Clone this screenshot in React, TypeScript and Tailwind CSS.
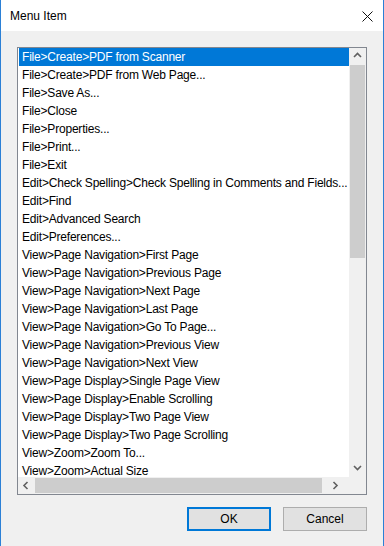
import { useState } from 'react'

const items = [
  'File>Create>PDF from Scanner',
  'File>Create>PDF from Web Page...',
  'File>Save As...',
  'File>Close',
  'File>Properties...',
  'File>Print...',
  'File>Exit',
  'Edit>Check Spelling>Check Spelling in Comments and Fields...',
  'Edit>Find',
  'Edit>Advanced Search',
  'Edit>Preferences...',
  'View>Page Navigation>First Page',
  'View>Page Navigation>Previous Page',
  'View>Page Navigation>Next Page',
  'View>Page Navigation>Last Page',
  'View>Page Navigation>Go To Page...',
  'View>Page Navigation>Previous View',
  'View>Page Navigation>Next View',
  'View>Page Display>Single Page View',
  'View>Page Display>Enable Scrolling',
  'View>Page Display>Two Page View',
  'View>Page Display>Two Page Scrolling',
  'View>Zoom>Zoom To...',
  'View>Zoom>Actual Size',
]

function Chevron({ dir }: { dir: 'up' | 'down' | 'left' | 'right' }) {
  const d = {
    up: 'M1 5 L4.5 1.5 L8 5',
    down: 'M1 2 L4.5 5.5 L8 2',
    left: 'M5.5 1 L2 4.5 L5.5 8',
    right: 'M2.5 1 L6 4.5 L2.5 8',
  }[dir]
  return (
    <svg width="9" height="9" viewBox="0 0 9 9" fill="none">
      <path d={d} stroke="#606060" strokeWidth="1.6" />
    </svg>
  )
}

export default function App() {
  const [selected, setSelected] = useState(0)

  return (
    <div
      className="w-[384px] h-[546px] flex flex-col bg-[#f0f0f0] border-x border-[#2b80d6] overflow-hidden text-[12px] text-black"
      style={{ fontFamily: '"Liberation Sans", "Noto Sans", sans-serif' }}
    >
      {/* title bar */}
      <div className="h-[31px] bg-white flex items-center justify-between pl-[9px] pr-[10px] shrink-0">
        <span className="text-[12px]">Menu Item</span>
        <svg width="11" height="11" viewBox="0 0 11 11" className="mt-px">
          <path d="M0.5 0.5 L10.5 10.5 M10.5 0.5 L0.5 10.5" stroke="#111" strokeWidth="1" />
        </svg>
      </div>

      {/* list box */}
      <div className="mt-[16px] ml-[16px] w-[350px] h-[448px] border border-[#828790] bg-white flex flex-col">
        <div className="flex flex-1 min-h-0">
          <div className="flex-1 min-w-0 overflow-hidden">
            {items.map((item, i) => (
              <div
                key={i}
                onClick={() => setSelected(i)}
                className={`h-[18px] leading-[18px] pl-[3px] ml-px whitespace-nowrap tracking-[-0.2px] ${
                  selected === i ? 'bg-[#0078d7] text-white' : ''
                }`}
              >
                {item}
              </div>
            ))}
          </div>
          {/* vertical scrollbar */}
          <div className="w-[17px] bg-[#f0f0f0] flex flex-col items-center shrink-0">
            <div className="h-[17px] w-full flex items-center justify-center">
              <Chevron dir="up" />
            </div>
            <div className="w-[15px] h-[193px] bg-[#cdcdcd]" />
            <div className="flex-1" />
            <div className="h-[17px] w-full flex items-center justify-center">
              <Chevron dir="down" />
            </div>
          </div>
        </div>
        {/* horizontal scrollbar */}
        <div className="h-[17px] flex shrink-0">
          <div className="flex-1 bg-[#f0f0f0] flex items-center">
            <div className="w-[17px] h-full flex items-center justify-center">
              <Chevron dir="left" />
            </div>
            <div className="w-[287px] h-[15px] bg-[#cdcdcd]" />
            <div className="flex-1 h-full flex items-center justify-center">
              <Chevron dir="right" />
            </div>
          </div>
          <div className="w-[17px] bg-[#f0f0f0]" />
        </div>
      </div>

      {/* buttons */}
      <div className="flex justify-end gap-[12px] mt-[12px] pr-[16px]">
        <button className="w-[84px] h-[24px] border-2 border-[#0078d7] bg-[#e1e1e1] text-[12px] leading-none">
          OK
        </button>
        <button className="w-[84px] h-[24px] border border-[#adadad] bg-[#e1e1e1] text-[12px] leading-none">
          Cancel
        </button>
      </div>
    </div>
  )
}
